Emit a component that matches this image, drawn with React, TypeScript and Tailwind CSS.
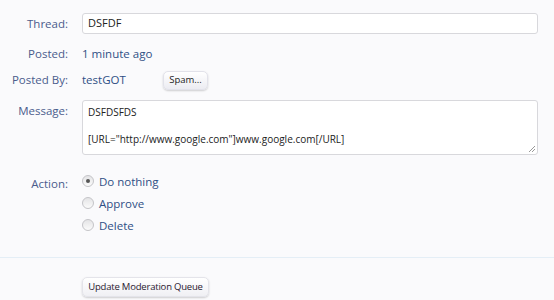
export default function App() {
    const label = "w-[68px] shrink-0 text-right text-[11.5px] text-[#4a5c8c]";
    return (
        <div className="w-[554px] h-[300px] bg-[#fafafc] font-['Open_Sans',sans-serif] overflow-hidden">
            <div className="pt-[13px]">
                <div className="flex items-center gap-[14px]">
                    <div className={label}>Thread:</div>
                    <div className="w-[456px] h-[21px] bg-white border border-[#d8d8dc] rounded-[3px] flex items-center px-[5px] text-[11px] text-[#222]">
                        DSFDF
                    </div>
                </div>
                <div className="flex items-center gap-[14px] mt-[10px] h-[20px]">
                    <div className={label}>Posted:</div>
                    <div className="text-[11.5px] text-[#2f4f85]">1 minute ago</div>
                </div>
                <div className="flex items-center gap-[14px] mt-[5px] h-[22px]">
                    <div className={label}>Posted By:</div>
                    <div className="w-[67px] text-[11.5px] text-[#2f4f85]">testGOT</div>
                    <button className="h-[19px] w-[45px] rounded-[5px] bg-gradient-to-b from-white to-[#ececf2] border border-[#e2e2ea] shadow-[0_1px_2px_rgba(0,0,0,0.18)] text-[9.5px] text-[#222]">
                        Spam...
                    </button>
                </div>
                <div className="flex items-start gap-[14px] mt-[9px]">
                    <div className={label + " pt-[2px]"}>Message:</div>
                    <div className="relative w-[456px] h-[55px] bg-white border border-[#d8d8dc] rounded-[3px] px-[5px] pt-[5px] text-[10px] text-[#222] leading-[13px]">
                        <div>DSFDSFDS</div>
                        <div className="mt-[14px]">[URL="http://www.google.com"]www.google.com[/URL]</div>
                        <svg className="absolute right-[1px] bottom-[1px]" width="8" height="8" viewBox="0 0 8 8">
                            <path d="M7 1 L1 7 M7 4 L4 7" stroke="#999" strokeWidth="1" />
                        </svg>
                    </div>
                </div>
                <div className="flex items-start gap-[14px] mt-[19px]">
                    <div className={label + " pt-[1px]"}>Action:</div>
                    <div className="flex flex-col gap-[6px] text-[11.5px] text-[#2f4f85]">
                        {["Do nothing", "Approve", "Delete"].map((t, i) => (
                            <div key={t} className="flex items-center gap-[5px] h-[16px]">
                                <span className="w-[12px] h-[12px] rounded-full border border-[#c4c4c8] bg-gradient-to-b from-[#e4e4e6] to-[#fbfbfb] flex items-center justify-center -mt-[3px]">
                                    {i === 0 && <span className="w-[4px] h-[4px] rounded-full bg-[#555]" />}
                                </span>
                                <span>{t}</span>
                            </div>
                        ))}
                    </div>
                </div>
                <div className="mt-[23px] border-t border-[#e4eef6]" />
                <div className="pl-[82px] mt-[14px]">
                    <button className="h-[20px] w-[127px] rounded-[5px] bg-gradient-to-b from-white to-[#f0f0f4] border border-[#e4e4ea] shadow-[0_1px_2px_rgba(0,0,0,0.18)] text-[9.5px] tracking-[-0.2px] text-[#2a2030]">
                        Update Moderation Queue
                    </button>
                </div>
            </div>
        </div>
    );
}
